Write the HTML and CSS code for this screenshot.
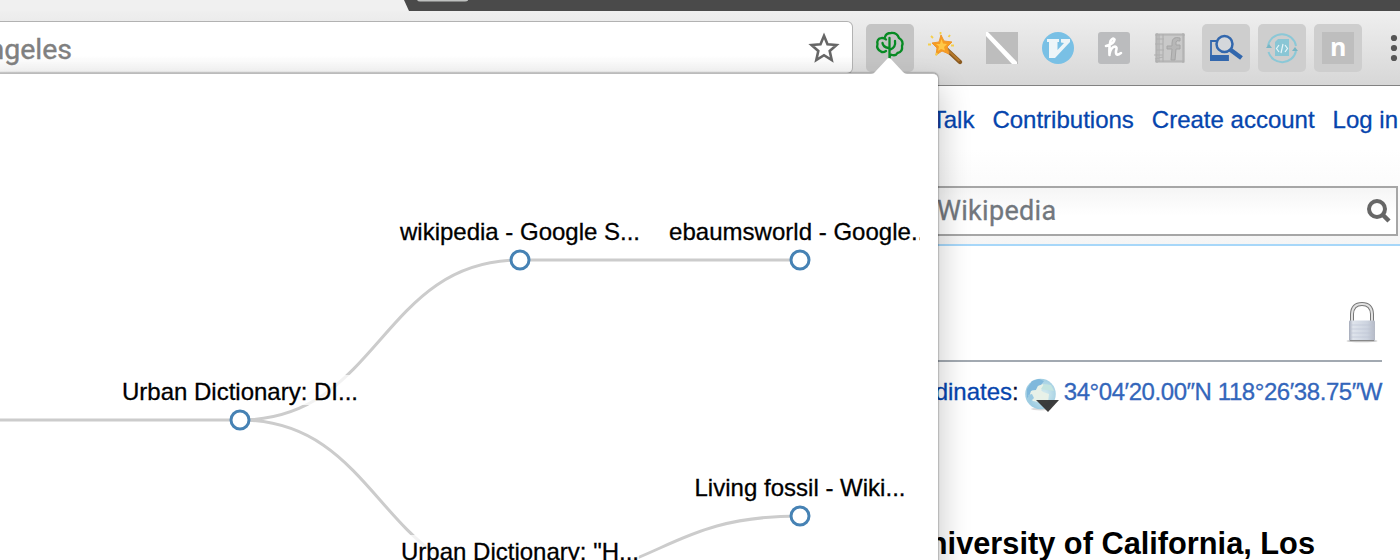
FILE: index.html
```html
<!DOCTYPE html>
<html lang="en">
<head>
<meta charset="utf-8">
<title>University of California, Los Angeles</title>
<link rel="stylesheet" href="styles.css">
</head>
<body>
<div class="browser">
  <div class="tabstrip">
    <svg width="1400" height="11" viewBox="0 0 1400 11"><path d="M0 0H404L409 11H0Z" fill="#f0f0f0"/><path d="M417 0H468V.5Q467 1.5 465 1.5H420Q418 1.5 417 0Z" fill="#bfc1c0"/></svg>
  </div>
  <header class="toolbar">
    <div class="omnibox">
      <span class="url">Angeles</span>
      <svg class="star" width="32" height="32" viewBox="0 0 32 32"><path d="M16 3.8L19.5 12.2L28.5 13L21.7 19L23.7 28L16 23.2L8.3 28L10.3 19L3.5 13L12.5 12.2Z" fill="none" stroke="#666" stroke-width="2.6"/></svg>
    </div>
    <div class="extensions">
      <div class="ext active"><svg width="48" height="48" viewBox="0 0 48 48" fill="none" stroke="#078a23" stroke-width="2.3" stroke-linecap="round"><path d="M20 27Q17 29 15 27.500Q10 25 11.500 20Q10.500 15 15 14.200Q18 13.500 20 15.500M19 13Q20 9 25 9Q31 8.500 33 14Q38 17 36 22Q37 28 31.500 29Q30 32 26 31Q24 30 23.500 34M23.500 14V34M16.500 19Q17 23 22.500 24M29 17Q30 23 24.500 25.500"/></svg></div>
      <div class="ext"><svg width="48" height="48" viewBox="0 0 48 48"><path d="M23 24L38 38" stroke="#8a5a20" stroke-width="4.400" stroke-linecap="round"/><path d="M23 23.500L37.500 37" stroke="#b67a2c" stroke-width="2"/><path d="M19 11L22 17L30 18L25 23L27 30L20 27L14 31L15 24L10 19L17 18Z" fill="#f69c22" stroke="#ef962c"/><path d="M19.500 15L21 19.500L25 20L22 23L23 26.500L19 25L16 27L17 22.500L14 20L18 20Z" fill="#ffc847"/><path d="M18.500 8V10.500M28 11L26.500 13M9 12L11 14M6 20.500H9M29 21.500H32M15 29L14 31.500" stroke="#f5cf4a" stroke-width="1.800"/></svg></div>
      <div class="ext"><svg width="48" height="48" viewBox="0 0 48 48"><path fill="#bdbdbd" d="M8 8H40V40H8Z"/><path d="M8 8V12L34 40H39V38L10 8Z" fill="#fff"/></svg></div>
      <div class="ext"><svg width="48" height="48" viewBox="0 0 48 48"><circle cx="24" cy="24" r="16" fill="#79c0e5"/><path d="M13 15H25V18H23.500V26L30 19L27 18.500V15H36V18L21 34H15V18H13Z" fill="#edf5f8"/></svg></div>
      <div class="ext"><svg width="48" height="48" viewBox="0 0 48 48"><rect x="8" y="8" width="32" height="32" rx="3" fill="#bbbcbe"/><path d="M16 22Q24 20 24.500 15.500Q23 13 20.500 17Q19 22 19.500 31M19.500 30Q21 23 25 22.500Q27.500 23 26 27Q25.500 33 31 29" fill="none" stroke="white" stroke-width="2.600" stroke-linecap="round"/></svg></div>
      <div class="ext"><svg width="48" height="48" viewBox="0 0 48 48" fill="none"><path d="M10 10H38V38H10Z" fill="#c9c9c9" stroke="#b0b0b0" stroke-width="1.200"/><path d="M9 11H39M9 37H38M11 9V39M37 9V39M17 10V38M10 15H18M9 20H17M10 26H18M8 31H17M9 35L17 33M13 10V38" stroke="#b0b0b0" stroke-width="1.200"/><path d="M34 14Q26 12 26 19V22H21V25H26L25 36H29L30 25H34V21H30V18Q30 16 34 17Z" fill="#b7b7b7" stroke="#a5a5a5"/></svg></div>
      <div class="ext shaded"><svg width="48" height="48" viewBox="0 0 48 48" fill="none" stroke="#3267ad"><path d="M15 17H9V36H26V31" stroke-width="1.800"/><path d="M8 31H26V37H8Z" fill="#3267ad" stroke="none"/><circle cx="22.500" cy="20" r="8" fill="#d4d7db" stroke-width="2.500"/><path d="M28 25.500L39.500 34" stroke-width="4.600"/></svg></div>
      <div class="ext shaded"><svg width="48" height="48" viewBox="0 0 48 48" fill="none" stroke="#8bc8d7" stroke-width="2"><path d="M10 22A14.200 14.200 0 0 1 38 22M38 27A14.200 14.200 0 0 1 10.500 28"/><path d="M8 24L11 20L14 24ZM34 27L37 23L40 27Z" fill="#78b6c4" stroke="none"/><path d="M20 15H31V32H17V18Z" fill="#8ac6d5" stroke="none"/><path d="M21 21L18.500 24.500L21 28M27 21L29.500 24.500L27 28M25 20L23 29" stroke="#e8f5f8" stroke-width="1.200"/></svg></div>
      <div class="ext shaded"><svg width="48" height="48" viewBox="0 0 48 48"><path fill="#bebebe" d="M8 8H40V40H8Z"/><text class="letter-n" x="16" y="32">n</text></svg></div>
    </div>
    <svg class="menu" width="8" height="28" viewBox="0 0 8 28" fill="#555"><circle cx="4" cy="4" r="3.100"/><circle cx="4" cy="14" r="3.100"/><circle cx="4" cy="24" r="3.100"/></svg>
  </header>
  <main class="page">
    <div class="page-head">
      <nav class="user-nav"><a>Talk</a><a>Contributions</a><a>Create account</a><a>Log in</a></nav>
      <div class="search"><span>Wikipedia</span><svg width="26" height="28" viewBox="0 0 26 28" fill="none" stroke="#666"><circle cx="10" cy="12" r="8" stroke-width="4"/><path d="M15.500 17.500L22 24" stroke-width="4.500"/></svg></div>
    </div>
    <article class="article">
      <div class="title-row">
        <svg width="34" height="44" viewBox="0 0 34 44"><defs><linearGradient id="metal"><stop stop-color="#a4aab9"/><stop offset=".15" stop-color="#dfe4ec"/><stop offset=".7" stop-color="#ccd3df"/><stop offset="1" stop-color="#b4b9c5"/></linearGradient></defs><ellipse cx="17" cy="42" rx="15.500" ry="1.300" fill="#c4c4c4"/><path d="M7 23V15Q7.500 5 17 5T27 15V23" fill="none" stroke="#777" stroke-width="4"/><path d="M7 23V15Q7.500 5 17 5T27 15V23" fill="none" stroke="#e2e2e2" stroke-width="2"/><rect x="4" y="21.500" width="26" height="20.500" rx="1" fill="url(#metal)"/><path d="M5 26H29M5 30H29M5 34H29M5 38H29" stroke="#bcc4d3" stroke-width=".6"/><path d="M5 41.500H29" stroke="#888"/></svg>
      </div>
      <div class="coordinates"><a>Coordinates</a><span>:</span>
        <svg width="36" height="36" viewBox="0 0 36 36"><defs><radialGradient id="globe" cx=".6" cy=".5"><stop stop-color="#d8edf0"/><stop offset="1" stop-color="#9fcde2"/></radialGradient></defs><ellipse cx="17" cy="32" rx="10" ry="1.500" fill="#ddd"/><circle cx="16.500" cy="17" r="15.300" fill="url(#globe)"/><path d="M3 12L8 4L15 2L20 4L17 8L14 9L12 13L8 13L6 18L3 21Z" fill="#7fb8dc"/><path d="M7 14L12 13L14 9L19 7L21 10L17 13L19 15L25 17L24 25L19 28L14 25L9 24L5 20Z" fill="#e8f1e8"/><path d="M20 7L27 8L30 14L23 13L17 12Z" fill="#c3e4e0"/><path d="M4 18L8 17L10 21L6 25Z" fill="#9acae2"/><path d="M12 23H35L24 35Z" fill="#333" opacity=".95"/></svg>
        <a class="geo">34°04′20.00″N 118°26′38.75″W</a></div>
      <h1 class="infobox-title">University of California, Los</h1>
    </article>
  </main>
</div>
<section class="popup">
  <svg class="arrow" width="36" height="17" viewBox="0 0 36 17"><path d="M0 17C2 17 3 16 4 15L16.500 1.500Q18 .5 19.500 1.500L32 15Q34 17 36 17Z" fill="#fff"/></svg>
  <svg class="tree" width="920" height="487" viewBox="0 73 920 487">
    <g class="link">
      <path d="M-40 420H240"/>
      <path d="M240 420C380 420 380 260 520 260"/>
      <path d="M240 420C380 420 380 580 520 580"/>
      <path d="M520 260H800"/>
      <path d="M520 580C660 580 660 516 800 516"/>
    </g>
    <g class="label-bg">
      <rect x="122" y="375" width="236" height="30"/>
      <rect x="400" y="215" width="240" height="30"/>
      <rect x="669" y="215" width="260" height="30"/>
      <rect x="694" y="471" width="212" height="30"/>
      <rect x="401" y="535" width="238" height="30"/>
    </g>
    <g class="node"><circle cx="240" cy="420" r="9"/><circle cx="520" cy="260" r="9"/><circle cx="800" cy="260" r="9"/><circle cx="800" cy="516" r="9"/></g>
    <g class="label">
      <text x="122" y="400" textLength="236">Urban Dictionary: DI...</text>
      <text x="400" y="240" textLength="240">wikipedia - Google S...</text>
      <text x="669" y="240" textLength="262">ebaumsworld - Google...</text>
      <text x="694.500" y="496" textLength="211">Living fossil - Wiki...</text>
      <text x="401" y="560" textLength="238">Urban Dictionary: "H...</text>
    </g>
  </svg>
</section>
</body>
</html>
```
FILE: styles.css
```css
body {
  margin: 0;
  font-family: "Liberation Sans", Arial, sans-serif;
  background: #fff;
}
.browser {
  width: 1400px;
  height: 560px;
  overflow: hidden;
  display: flex;
  flex-direction: column;
}
svg { display: block; flex: none; }
.tabstrip { height: 11px; background: #4a4a4a; flex: none; }
.toolbar {
  box-sizing: border-box;
  height: 75px;
  flex: none;
  display: flex;
  align-items: flex-start;
  padding-top: 10px;
  background: linear-gradient(#efefef, #d7d7d7);
  border-bottom: 1px solid #828282;
}
.omnibox {
  box-sizing: border-box;
  width: 853px;
  height: 53px;
  display: flex;
  align-items: center;
  justify-content: space-between;
  padding-right: 12px;
  background: linear-gradient(#fff 65%, #f3f3f3);
  border: 1px solid #b2b2b2;
  border-left: 0;
  border-radius: 0 6px 6px 0;
}
.url {
  margin-left: -33px;
  padding-top: 3px;
  width: 105px;
  text-align: right;
  font: 28.5px Roboto, sans-serif;
  color: #808080;
  -webkit-text-stroke: 0.4px;
}
.extensions { display: flex; gap: 8px; margin: 3px 0 0 13px; }
.ext { width: 48px; height: 48px; border-radius: 5px; }
.active { background: #c4c4c4; }
.shaded { background: #cecece; }
.letter-n { font: bold 25px "Open Sans", sans-serif; fill: #fff; }
.menu { margin: 13px 0 0 28px; }
.page { flex: 1; }
.page-head {
  box-sizing: border-box;
  height: 160px;
  padding: 20px 2px 0 0;
  background: linear-gradient(#fff 40%, #f5f5f5);
  border-bottom: 2px solid #a7d7f9;
}
.user-nav {
  display: flex;
  justify-content: flex-end;
  gap: 18px;
  font-size: 24px;
  line-height: 28px;
  color: #0645ad;
  -webkit-text-stroke: 0.3px;
}
.search {
  box-sizing: border-box;
  width: 480px;
  height: 50px;
  margin: 52px 0 0 auto;
  display: flex;
  align-items: center;
  justify-content: space-between;
  padding: 0 3px 0 17px;
  border: 2px solid #a6a6a6;
  background: linear-gradient(#f5f5f5, #fff 60%);
  font: 27px Roboto, sans-serif;
  letter-spacing: 0.3px;
  color: #72777d;
  -webkit-text-stroke: 0.3px;
}
.article { padding-right: 18px; }
.title-row {
  height: 114px;
  display: flex;
  justify-content: flex-end;
  align-items: flex-end;
  box-sizing: content-box;
  border-bottom: 2px solid #a2a9b1;
}
.title-row svg { margin: 0 3px 17px 0; }
.coordinates {
  display: flex;
  justify-content: flex-end;
  align-items: center;
  height: 36px;
  margin-top: 12px;
  font-size: 24px;
  color: #0b0b33;
  -webkit-text-stroke: 0.3px;
}
.coordinates a { color: #0645ad; }
.coordinates svg { margin: 6px 4px 0 5px; }
.coordinates .geo { color: #36b; letter-spacing: -0.43px; }
.infobox-title {
  margin: 116px 67px 0 0;
  text-align: right;
  font-size: 30.75px;
  line-height: 36px;
  white-space: nowrap;
}
.popup {
  position: absolute;
  left: -10px;
  top: 73px;
  width: 938px;
  height: 510px;
  padding-left: 10px;
  background: #fff;
  border-top: 1px solid #bbb;
  box-sizing: content-box;
  border-radius: 0 5px 0 0;
  box-shadow: 0 0 2px rgba(0,0,0,.65), 4px 14px 30px rgba(0,0,0,.2);
  clip-path: inset(-17px -50px 23px 0);
}
.arrow { position: absolute; left: 881px; top: -17px; }
.tree { margin-top: -1px; }
.link { fill: none; stroke: #ccc; stroke-width: 3; }
.label-bg { fill: #fff; opacity: .75; }
.node { fill: #fff; stroke: #4682b4; stroke-width: 3; }
.label {
  font: 24px "Liberation Sans", Arial, sans-serif;
  fill: #000;
  stroke: #000;
  stroke-width: 0.3px;
}
```
